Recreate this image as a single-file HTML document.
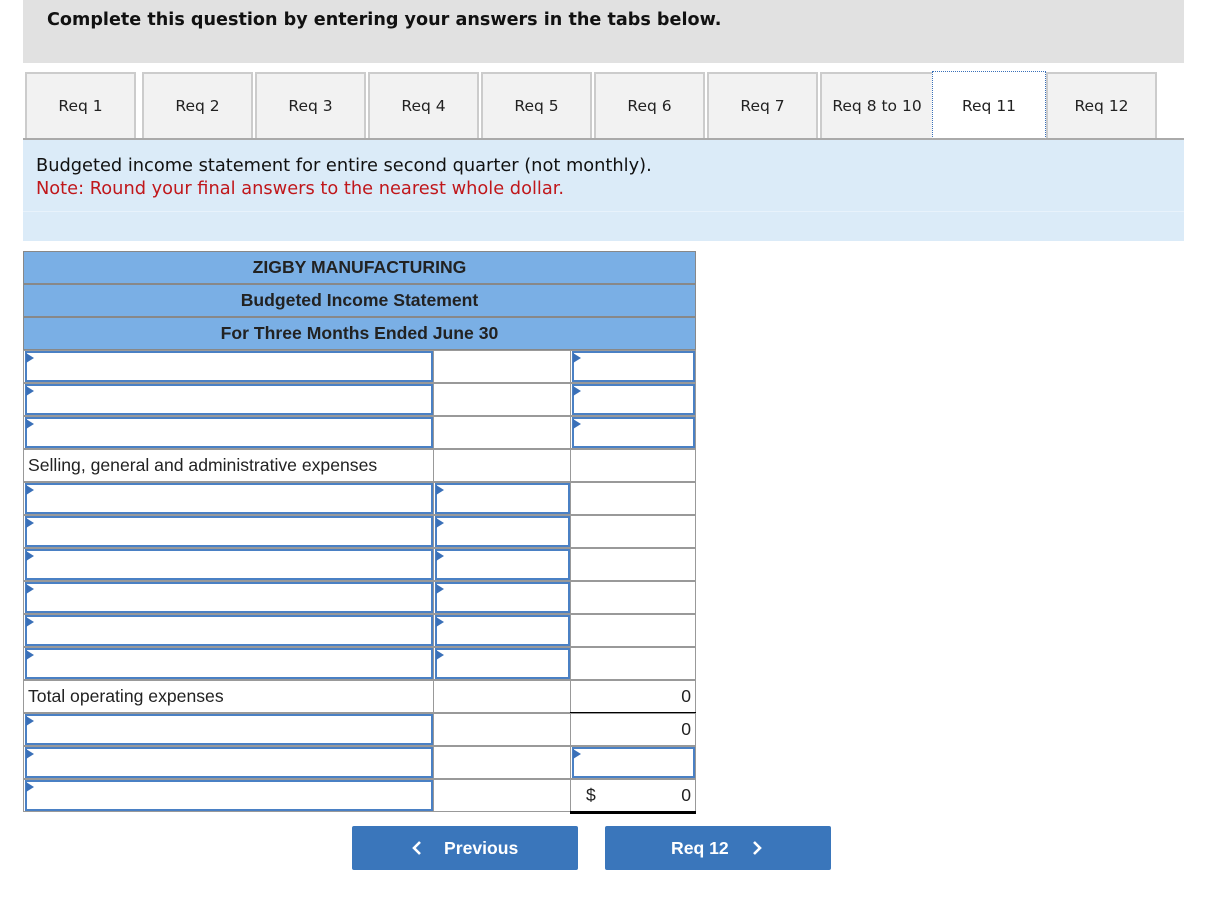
<!DOCTYPE html>
<html><head><style>
*{box-sizing:border-box;margin:0;padding:0}
body{width:1216px;height:922px;background:#fff;position:relative;font-family:"Liberation Sans",sans-serif;overflow:hidden}
.top{position:absolute;left:23px;top:0;width:1161px;height:63px;background:#e1e1e1}
.top b{position:absolute;left:24px;top:10px;font-family:"DejaVu Sans",sans-serif;font-size:17.6px;color:#111}
.tab{position:absolute;top:72px;height:67px;width:111px;background:#f2f2f2;border:2px solid #ccc;border-bottom:none;font-family:"DejaVu Sans",sans-serif;font-size:15.5px;color:#222;text-align:center;line-height:64px}
.tab.a{background:#fff;border:1px dotted #3a70b8;border-bottom:none;line-height:68px}
.blue{position:absolute;left:23px;top:138px;width:1161px;height:103px;background:#dbebf8;border-top:2px solid #aaa}
.blue .l{position:absolute;left:0;top:71px;width:100%;height:1px;background:#e8f2fb}
.t1{position:absolute;left:13px;top:14px;font-family:"DejaVu Sans",sans-serif;font-size:17.8px;color:#111;line-height:23px}
.t1 span{color:#c0171b}
.hd{position:absolute;left:23px;width:673px;height:33px;background:#7aafe5;border:1px solid #888;text-align:center;font-weight:bold;font-size:17.6px;line-height:31px;color:#222}
.c{position:absolute;height:33px;border:1px solid #999;background:#fff;font-size:17.6px;color:#222;line-height:31px}
.in{position:absolute;height:31px;border:2px solid #4a80c4;background:#fff}
.in:before{content:"";position:absolute;left:-1px;top:0;border-left:8px solid #3a70b8;border-top:5px solid transparent;border-bottom:5px solid transparent}
.btn{position:absolute;top:826px;height:44px;background:#3a76bb;border-radius:2px;color:#fff;font-weight:bold;font-size:17.6px;line-height:44px}
.btn svg{position:absolute;top:15px}
</style></head><body>
<div class="top"><b>Complete this question by entering your answers in the tabs below.</b></div>
<div class="tab" style="left:25px">Req 1</div>
<div class="tab" style="left:142px">Req 2</div>
<div class="tab" style="left:255px">Req 3</div>
<div class="tab" style="left:368px">Req 4</div>
<div class="tab" style="left:481px">Req 5</div>
<div class="tab" style="left:594px">Req 6</div>
<div class="tab" style="left:707px">Req 7</div>
<div class="tab" style="left:820px;width:114px">Req 8 to 10</div>
<div class="tab a" style="left:932px;width:114px;top:71px;height:68px">Req 11</div>
<div class="tab" style="left:1046px">Req 12</div>
<div class="blue"><div class="l"></div><div class="t1">Budgeted income statement for entire second quarter (not monthly).<br><span>Note: Round your final answers to the nearest whole dollar.</span></div></div>
<div class="hd" style="top:251px">ZIGBY MANUFACTURING</div>
<div class="hd" style="top:284px">Budgeted Income Statement</div>
<div class="hd" style="top:317px">For Three Months Ended June 30</div>
<div id="rows"></div>
<script>
var r=document.getElementById('rows'),h='';
var rows=[
['i','','i'],['i','','i'],['i','','i'],
['Selling, general and administrative expenses','',''],
['i','i',''],['i','i',''],['i','i',''],['i','i',''],['i','i',''],['i','i',''],
['Total operating expenses','','0'],['i','','0'],['i','','i'],['i','','$0']];
rows.forEach(function(x,k){var y=350+k*33;
var cols=[[23,411],[433,138],[570,126]];
x.forEach(function(v,j){var L=cols[j][0],W=cols[j][1];
h+='<div class="c" style="left:'+L+'px;top:'+y+'px;width:'+W+'px"></div>';
if(v=='i')h+='<div class="in" style="left:'+(L+2)+'px;top:'+(y+1)+'px;width:'+(W-3)+'px"></div>';
else if(v){ if(j==0)h+='<div style="position:absolute;left:28px;top:'+(y+1)+'px;font-size:17.6px;line-height:31px;color:#222">'+v+'</div>';
else { if(v[0]=='$'){h+='<div style="position:absolute;left:586px;top:'+(y+1)+'px;font-size:17.6px;line-height:31px;color:#222">$</div>';v=v.slice(1);}
h+='<div style="position:absolute;left:'+L+'px;width:'+(W-5)+'px;text-align:right;top:'+(y+1)+'px;font-size:17.6px;line-height:31px;color:#222">'+v+'</div>';}}
});});
h+='<div style="position:absolute;left:570px;top:811px;width:126px;height:3px;background:#000"></div>';
h+='<div style="position:absolute;left:570px;top:712px;width:126px;height:1px;background:#000"></div>';
r.innerHTML=h;
</script>
<div class="btn" style="left:352px;width:226px"><svg style="left:60px" width="10" height="14" viewBox="0 0 10 14"><path d="M8 1L2 7l6 6" fill="none" stroke="#fff" stroke-width="2.6"/></svg><span style="position:absolute;left:92px">Previous</span></div>
<div class="btn" style="left:605px;width:226px"><span style="position:absolute;left:66px">Req 12</span><svg style="left:147px" width="10" height="14" viewBox="0 0 10 14"><path d="M2 1l6 6-6 6" fill="none" stroke="#fff" stroke-width="2.6"/></svg></div>
</body></html>
